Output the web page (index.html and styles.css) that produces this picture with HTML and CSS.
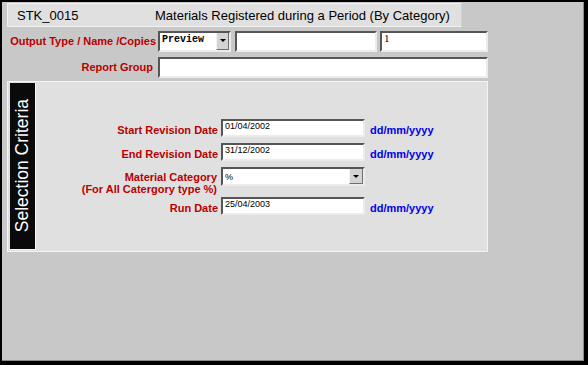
FILE: index.html
```html
<!DOCTYPE html>
<html lang="en">
<head>
    <meta charset="UTF-8">
    <title>STK_0015</title>
    <link rel="stylesheet" href="styles.css">
</head>
<body>
    <div class="window">
        <div class="title-bar">
            <span class="form-code">STK_0015</span>
            <span class="form-title">Materials Registered during a Period (By Category)</span>
        </div>

        <div class="top-row">
            <label class="top-label">Output Type / Name /Copies</label>
            <div class="combo combo-output">
                <span class="combo-text mono">Preview</span>
                <span class="combo-btn"><span class="arrow"></span></span>
            </div>
            <input class="field field-name" type="text" value="">
            <input class="field field-copies serif" type="text" value="1">
        </div>

        <div class="top-row">
            <label class="top-label group-label">Report Group</label>
            <input class="field field-group" type="text" value="">
        </div>

        <div class="panel">
            <div class="side-bar"><span>Selection Criteria</span></div>
            <div class="criteria">
                <label class="crit-label">Start Revision Date</label>
                <input class="field crit-field" type="text" value="01/04/2002">
                <span class="hint">dd/mm/yyyy</span>

                <label class="crit-label">End Revision Date</label>
                <input class="field crit-field" type="text" value="31/12/2002">
                <span class="hint">dd/mm/yyyy</span>

                <label class="crit-label two-line">Material Category<br>(For All Catergory type %)</label>
                <div class="combo combo-cat">
                    <span class="combo-text">%</span>
                    <span class="combo-btn"><span class="arrow"></span></span>
                </div>
                <span></span>

                <label class="crit-label">Run Date</label>
                <input class="field crit-field" type="text" value="25/04/2003">
                <span class="hint">dd/mm/yyyy</span>
            </div>
        </div>
    </div>
</body>
</html>
```

FILE: styles.css
```css
body {
    margin: 0;
    padding: 0;
    font-family: "Liberation Sans", Arial, sans-serif;
}

.window {
    width: 588px;
    height: 365px;
    box-sizing: border-box;
    background-color: #c8c8c8;
    border-top: 2px solid #000;
    border-left: 2px solid #000;
    border-right: 4px solid #000;
    border-bottom: 4px solid #000;
    box-shadow: inset -1px -1px 0 #8a8a8a;
    padding: 1px 0 0 5px;
}

.title-bar {
    width: 455px;
    height: 24px;
    box-sizing: border-box;
    background-color: #e0e0e0;
    border: 1px solid #f2f2f2;
    border-right-color: #d0d0d0;
    display: flex;
    align-items: center;
    font-size: 13px;
    color: #000;
}

.form-code {
    margin-left: 9px;
    width: 138px;
}

.top-row {
    display: flex;
    align-items: center;
    margin-top: 3px;
    height: 22px;
}

.top-row + .top-row {
    margin-top: 4px;
}

.top-label {
    width: 149px;
    text-align: right;
    font-size: 11px;
    font-weight: bold;
    color: #b80000;
    margin-right: 2px;
}

.group-label {
    padding-right: 3px;
    box-sizing: border-box;
}

.field {
    box-sizing: border-box;
    height: 21px;
    margin: 0;
    padding: 0 0 6px 2px;
    background-color: #fff;
    border: 2px solid #555;
    border-right-color: #ececec;
    border-bottom-color: #ececec;
    border-radius: 0;
    font-family: "Liberation Sans", Arial, sans-serif;
    font-size: 9px;
    color: #000;
    outline: none;
}

.serif {
    font-family: "Liberation Serif", serif;
    font-size: 11px;
}

.field-name {
    width: 142px;
    margin-left: 4px;
}

.field-copies {
    width: 108px;
    margin-left: 3px;
}

.field-group {
    width: 330px;
}

.combo {
    box-sizing: border-box;
    height: 21px;
    display: flex;
    background-color: #fff;
    border: 2px solid #555;
    border-right-color: #ececec;
    border-bottom-color: #ececec;
}

.combo-output {
    width: 73px;
}

.combo-text {
    flex: 1;
    font-size: 9px;
    padding: 2px 0 0 2px;
}

.mono {
    font-family: "Liberation Mono", "Courier New", monospace;
    font-weight: bold;
    font-size: 10px;
    padding-top: 1px;
}

.combo-btn {
    width: 11px;
    background-color: #d4d4d4;
    border-left: 1px solid #f4f4f4;
    border-right: 1px solid #707070;
    border-bottom: 1px solid #707070;
    display: flex;
    align-items: center;
    justify-content: center;
}

.arrow {
    width: 0;
    height: 0;
    border-left: 3px solid transparent;
    border-right: 3px solid transparent;
    border-top: 3px solid #000;
}

.panel {
    width: 481px;
    height: 171px;
    box-sizing: border-box;
    margin-top: 3px;
    background-color: #e0e0e0;
    border: 1px solid #f4f4f4;
    display: flex;
    padding: 1px 0 1px 2px;
}

.side-bar {
    width: 25px;
    background-color: #0a0a0a;
    border-right: 1px solid #f8f8f8;
    border-bottom: 1px solid #f8f8f8;
    display: flex;
    align-items: center;
    justify-content: center;
}

.side-bar span {
    writing-mode: vertical-rl;
    transform: rotate(180deg);
    color: #fff;
    font-size: 17.5px;
    white-space: nowrap;
}

.criteria {
    display: grid;
    grid-template-columns: 182px 144px auto;
    column-gap: 3px;
    row-gap: 6px;
    align-content: start;
    align-items: center;
    padding-top: 36px;
}

.crit-label {
    text-align: right;
    font-size: 11px;
    font-weight: bold;
    color: #b80000;
    padding-top: 3px;
}

.two-line {
    line-height: 12px;
    padding-top: 0;
    padding-right: 1px;
    align-self: start;
    margin-top: 4px;
    margin-bottom: -4px;
}

.crit-field {
    width: 144px;
    height: 18px;
    padding-bottom: 4px;
}

.combo-cat {
    width: 144px;
    height: 19px;
    align-self: start;
}

.combo-cat .combo-text {
    padding-top: 3px;
}

.combo-cat .combo-btn {
    width: 12px;
}

.hint {
    font-size: 11px;
    font-weight: bold;
    color: #0000e8;
    padding: 4px 0 0 2px;
}
```
